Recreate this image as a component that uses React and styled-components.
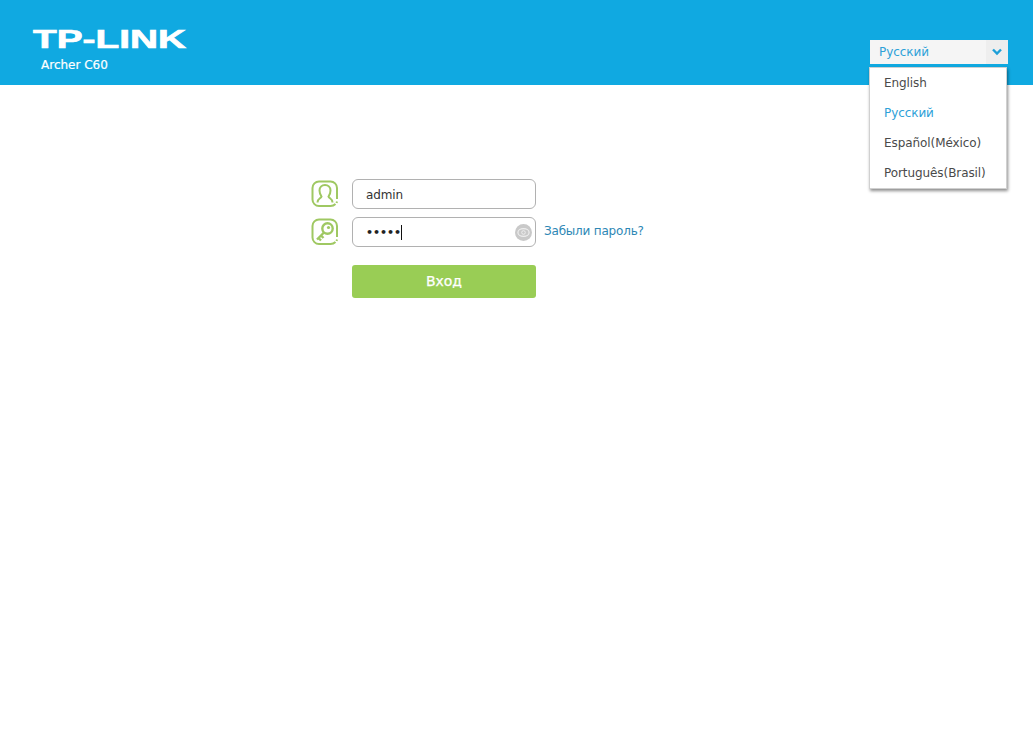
import React from "react";
import styled, { createGlobalStyle } from "styled-components";

const Global = createGlobalStyle`
  html, body { margin: 0; padding: 0; background: #fff; }
  body { font-family: "DejaVu Sans", Verdana, sans-serif; font-size: 12px; color: #333; }
`;
const Page = styled.div`
  width: 1033px; height: 756px; overflow: hidden; position: relative; background: #fff;
`;
const Header = styled.header`
  height: 85px; background: #10a9e1; display: flex; justify-content: space-between;
  padding: 0 25px 0 33px; box-sizing: border-box;
`;
const Brand = styled.div`
  display: flex; flex-direction: column; padding-top: 27px;
`;
const LogoSvg = styled.svg`
  display: block; width: 154px; height: 24px; overflow: visible;
`;
const Model = styled.div`
  color: #fff; font-size: 12px; font-weight: 400; margin: 6px 0 0 8px; line-height: 16px; -webkit-text-stroke: 0.2px #fff;
`;
const LangArea = styled.div`
  position: relative; width: 138px; padding-top: 40px;
`;
const LangSelect = styled.div`
  height: 24px; width: 138px; background: #f5f5f5; display: flex; justify-content: space-between; align-items: center;
`;
const LangValue = styled.span`
  color: #2ea1d8; font-size: 12px; padding-left: 9px; letter-spacing: -0.05px;
`;
const LangArrow = styled.span`
  width: 22px; height: 24px; background: #eeeeee; display: flex; align-items: center; justify-content: center;
`;
const LangMenu = styled.ul`
  position: absolute; top: 67px; left: -1px; width: 138px; height: 122px; margin: 0; padding: 1px 0 0; list-style: none;
  background: #fff; box-sizing: border-box; border: 1px solid #d0d0d0; box-shadow: 1px 2px 3px rgba(0,0,0,.45); z-index: 2;
`;
const LangItem = styled.li`
  height: 30px; line-height: 28px; padding-left: 14px; font-size: 12px; white-space: nowrap; letter-spacing: -0.08px;
  color: ${p => (p.$active ? "#2ea1d8" : "#4a4a4a")};
`;
const Form = styled.form`
  margin: 94px 0 0 311px; display: grid; grid-template-columns: 27px 184px auto; column-gap: 14px; row-gap: 8px; width: 420px;
`;
const FieldIcon = styled.svg`
  display: block; width: 28px; height: 28px; align-self: center;
`;
const Field = styled.div`
  height: 30px; border: 1px solid #b1b1b1; border-radius: 6px; box-sizing: border-box; background: #fff;
  display: flex; align-items: center; padding: 2px 3px 0 13px; position: relative; color: #333; font-size: 12px;
  letter-spacing: -0.1px;
`;
const PasswordField = styled(Field)`
  padding-top: 0;
`;
const Dots = styled.span`
  color: #222; letter-spacing: 0; font-size: 11px; font-weight: 700; margin-right: -1px;
`;
const Caret = styled.span`
  display: inline-block; width: 1px; height: 15px; background: #111; margin-left: 1px;
`;
const EyeBtn = styled.svg`
  width: 17px; height: 17px; margin-left: auto; display: block;
`;
const Forgot = styled.a`
  color: #2d87b5; font-size: 12px; margin-left: -6px; align-self: center; white-space: nowrap; position: relative; top: -1px;
  letter-spacing: -0.2px;
`;
const Empty = styled.div``;
const Submit = styled.button`
  grid-column: 2; height: 33px; margin-top: 10px; border: 0; border-radius: 3px; background: #99cd55;
  color: #fff; font: 400 14px "DejaVu Sans", Verdana, sans-serif; padding: 0 0 2px; letter-spacing: -0.05px;
  -webkit-text-stroke: 0.25px #fff;
`;

const ICON_GREEN = "#9fc862";

const IconFrame = () => (
  <>
    <path d="M26 19 V8 A6.5 6.5 0 0 0 19.5 1.5 H8 A6.5 6.5 0 0 0 1.5 8 V19.5 A6.5 6.5 0 0 0 8 26 H19.5 C21.5 26 23 25.5 24.5 24" fill="none" stroke={ICON_GREEN} strokeWidth="2" />
    <path d="M26 21.5 L25.6 23" fill="none" stroke={ICON_GREEN} strokeWidth="2" />
  </>
);

export default function App() {
  return (
    <Page>
      <Global />
      <Header>
        <Brand>
          <LogoSvg viewBox="0 0 154 24" aria-label="TP-LINK">
            <text x="0" y="21" fontFamily="Liberation Sans" fontWeight="700" fontSize="26" fill="#fff" stroke="#fff" strokeWidth="0.7" textLength="153" lengthAdjust="spacingAndGlyphs">TP-LINK</text>
          </LogoSvg>
          <Model>Archer C60</Model>
        </Brand>
        <LangArea>
          <LangSelect>
            <LangValue>Русский</LangValue>
            <LangArrow>
              <svg width="12" height="8" viewBox="0 0 12 8"><path d="M2 1.5 L6 5.5 L10 1.5" fill="none" stroke="#1d9fd8" strokeWidth="2.4" /></svg>
            </LangArrow>
          </LangSelect>
          <LangMenu>
            <LangItem>English</LangItem>
            <LangItem $active>Русский</LangItem>
            <LangItem>Español(México)</LangItem>
            <LangItem>Português(Brasil)</LangItem>
          </LangMenu>
        </LangArea>
      </Header>
      <Form>
        <FieldIcon viewBox="0 0 28 28">
          <IconFrame />
          <path d="M6.5 22.5 C6.5 18.5 10 18.5 10.5 16.5 C9 14.5 8.5 12.5 8.5 10.5 C8.5 7 11 5 14 5 C17 5 19.5 7 19.5 10.5 C19.5 12.5 19 14.5 17.5 16.5 C18 18.5 21.5 18.5 21.5 22.5" fill="none" stroke={ICON_GREEN} strokeWidth="2" />
        </FieldIcon>
        <Field>admin</Field>
        <Empty />
        <FieldIcon viewBox="0 0 28 28">
          <IconFrame />
          <circle cx="16.5" cy="10.5" r="5.2" fill="none" stroke={ICON_GREEN} strokeWidth="2.4" />
          <circle cx="17.5" cy="9.5" r="1.6" fill={ICON_GREEN} />
          <path d="M13 14.5 L6 21.5 M7.5 20 L10 22.5 M10 17.5 L12.5 20" fill="none" stroke={ICON_GREEN} strokeWidth="2.4" />
        </FieldIcon>
        <PasswordField>
          <Dots>•••••</Dots><Caret />
          <EyeBtn viewBox="0 0 17 17">
            <circle cx="8.5" cy="8.5" r="8.5" fill="#c9c9c9" />
            <ellipse cx="8.5" cy="8.5" rx="5.6" ry="3.8" fill="none" stroke="#eee" strokeWidth="1.2" />
            <circle cx="8.5" cy="8.5" r="1.8" fill="none" stroke="#eee" strokeWidth="1" />
          </EyeBtn>
        </PasswordField>
        <Forgot>Забыли пароль?</Forgot>
        <Submit type="button">Вход</Submit>
      </Form>
    </Page>
  );
}
